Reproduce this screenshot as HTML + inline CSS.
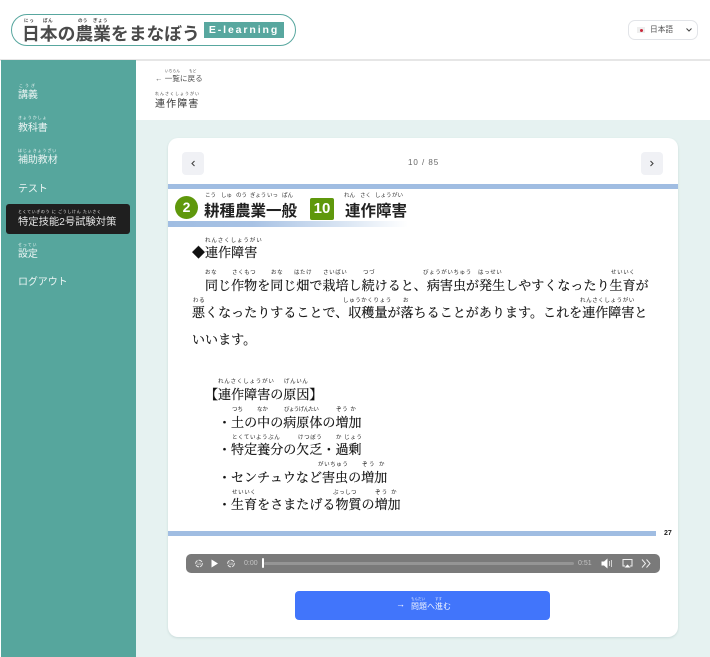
<!DOCTYPE html>
<html lang="ja"><head><meta charset="utf-8"><style>
html,body{margin:0;padding:0}
body{width:710px;height:657px;position:relative;overflow:hidden;background:#fff;font-family:"Liberation Sans","Noto Sans CJK JP",sans-serif}
.a{position:absolute;white-space:nowrap;line-height:1}
.r{font-size:4px;color:#444}
.s{font-family:"Liberation Serif","Noto Serif CJK JP","Noto Serif CJK SC",serif;font-size:13px;letter-spacing:.05px;color:#111;-webkit-text-stroke:.18px #111}
.rs{font-family:"Liberation Sans","Noto Sans CJK JP",sans-serif;font-size:5.500px;letter-spacing:.6px;color:#222}
.h{font-size:5.500px;letter-spacing:0;top:193.500px;color:#333}
.n{color:#fff;font-size:10px;letter-spacing:-.1px;opacity:.88}
.nr{color:#fff;font-size:4px;letter-spacing:.9px;opacity:.9}
</style></head><body>
<!-- header -->
<div class="a" style="left:11px;top:13.500px;width:285px;height:32px;border:1px solid #58a79f;border-radius:16px;box-sizing:border-box"></div>
<div class="a" style="left:22px;top:26px;font-size:17.800px;font-weight:700;color:#4a4a4a">日本の農業をまなぼう</div>
<div class="a r" style="left:24px;top:18.500px;font-size:4.500px;letter-spacing:.8px;font-weight:700">にっ</div>
<div class="a r" style="left:43px;top:18.500px;font-size:4.500px;letter-spacing:.6px;font-weight:700">ぽん</div>
<div class="a r" style="left:78px;top:18.500px;font-size:4.500px;letter-spacing:.4px;font-weight:700">のう</div>
<div class="a r" style="left:93px;top:18.500px;font-size:4.500px;letter-spacing:.6px;font-weight:700">ぎょう</div>
<div class="a" style="left:204px;top:22px;width:80px;height:16px;background:#58a79f;color:#fff;font-size:10.500px;font-weight:700;letter-spacing:1.900px;text-align:center;line-height:16px">E-learning</div>
<div class="a" style="left:628px;top:20px;width:70px;height:20px;border:1px solid #e2e4e8;border-radius:7px;box-sizing:border-box"></div>
<div class="a" style="left:637px;top:27px;width:8px;height:6px;background:#eee"></div>
<div class="a" style="left:639.500px;top:28.500px;width:3px;height:3px;border-radius:50%;background:#c8283c"></div>
<div class="a" style="left:650px;top:25.500px;font-size:7.700px;color:#555">日本語</div>
<svg class="a" style="left:685px;top:27px" width="8" height="6" viewBox="0 0 8 6"><path d="M1.500 1.500L4 4l2.500-2.500" fill="none" stroke="#444" stroke-width="1"/></svg>
<div class="a" style="left:0;top:59px;width:710px;height:1.500px;background:#e6e6e6"></div>
<!-- sidebar -->
<div class="a" style="left:1px;top:60px;width:135px;height:597px;background:#56a69d"></div>
<div class="a nr" style="left:19px;top:84px;letter-spacing:2px">こうぎ</div>
<div class="a n" style="left:18px;top:90.500px">講義</div>
<div class="a nr" style="left:18px;top:116px">きょうかしょ</div>
<div class="a n" style="left:18px;top:123.500px">教科書</div>
<div class="a nr" style="left:18px;top:149px">ほじょきょうざい</div>
<div class="a n" style="left:18px;top:155.500px">補助教材</div>
<div class="a n" style="left:18px;top:184.500px">テスト</div>
<div class="a" style="left:6px;top:204px;width:124px;height:30px;background:#1f1f1f;border-radius:3px"></div>
<div class="a nr" style="left:18px;top:210px;letter-spacing:.62px">とくていぎのう に ごうしけん たいさく</div>
<div class="a n" style="left:18px;top:217.500px;font-size:10.300px;letter-spacing:0">特定技能2号試験対策</div>
<div class="a nr" style="left:18px;top:242.500px">せってい</div>
<div class="a n" style="left:18px;top:250px">設定</div>
<div class="a n" style="left:18px;top:277.500px">ログアウト</div>
<!-- top content -->
<div class="a" style="left:136px;top:120px;width:574px;height:537px;background:#e6f2f1"></div>
<div class="a r" style="left:165px;top:70px;font-size:3.500px;letter-spacing:.3px">いちらん</div>
<div class="a r" style="left:189px;top:70px;font-size:3.500px;letter-spacing:.3px">もど</div>
<div class="a" style="left:155px;top:75px;font-size:7.600px;color:#555">← 一覧に戻る</div>
<div class="a r" style="left:155px;top:92px;letter-spacing:1px">れんさくしょうがい</div>
<div class="a" style="left:155px;top:99.500px;font-size:10px;letter-spacing:1.100px;color:#333">連作障害</div>
<!-- card -->
<div class="a" style="left:168px;top:138px;width:510px;height:499px;background:#fff;border-radius:10px;box-shadow:0 1px 2px rgba(120,150,150,.25)"></div>
<div class="a" style="left:182px;top:152px;width:22px;height:23px;background:#f0f1f5;border-radius:4px"></div>
<svg class="a" style="left:189px;top:159px" width="8" height="9" viewBox="0 0 8 9"><path d="M5.500 2L3 4.500 5.500 7" fill="none" stroke="#444" stroke-width="1.100"/></svg>
<div class="a" style="left:641px;top:152px;width:22px;height:23px;background:#f0f1f5;border-radius:4px"></div>
<svg class="a" style="left:648px;top:159px" width="8" height="9" viewBox="0 0 8 9"><path d="M2.500 2L5 4.500 2.500 7" fill="none" stroke="#444" stroke-width="1.100"/></svg>
<div class="a" style="left:408px;top:158.500px;font-size:8px;letter-spacing:.95px;color:#666">10 / 85</div>
<!-- slide -->
<div class="a" style="left:168px;top:184px;width:510px;height:5px;background:#a0bde2"></div>
<div class="a" style="left:168px;top:221px;width:240px;height:6px;background:linear-gradient(90deg,#a0bde2 0%,#a8c2e4 35%,#dce7f4 75%,#fff 100%)"></div>
<div class="a" style="left:175px;top:196px;width:23px;height:23px;border-radius:50%;background:#5f980c;color:#fff;font-size:14px;font-weight:700;line-height:23px;text-align:center">2</div>
<div class="a" style="left:204px;top:203.500px;font-size:15.500px;font-weight:700;color:#222">耕種農業一般</div>
<div class="a h" style="left:205px">こう</div>
<div class="a h" style="left:221px">しゅ</div>
<div class="a h" style="left:236px">のう</div>
<div class="a h" style="left:250px">ぎょう</div>
<div class="a h" style="left:267px">いっ</div>
<div class="a h" style="left:282px">ぱん</div>
<div class="a" style="left:310px;top:198px;width:24px;height:22px;border-radius:2px;background:#5f980c;color:#fff;font-size:15px;font-weight:700;line-height:22px;text-align:center">10</div>
<div class="a" style="left:345px;top:203.500px;font-size:15.500px;font-weight:700;color:#222">連作障害</div>
<div class="a h" style="left:344px">れん</div>
<div class="a h" style="left:360px">さく</div>
<div class="a h" style="left:375px">しょう</div>
<div class="a h" style="left:392px">がい</div>
<!-- body text -->
<div class="a rs" style="left:205px;top:239px;letter-spacing:.9px">れんさくしょうがい</div>
<div class="a s" style="left:192px;top:245.500px">◆連作障害</div>
<div class="a rs" style="left:205px;top:271px">おな</div>
<div class="a rs" style="left:232px;top:271px">さくもつ</div>
<div class="a rs" style="left:271px;top:271px">おな</div>
<div class="a rs" style="left:294px;top:271px">はたけ</div>
<div class="a rs" style="left:323px;top:271px">さいばい</div>
<div class="a rs" style="left:363px;top:271px">つづ</div>
<div class="a rs" style="left:423px;top:271px">びょうがいちゅう</div>
<div class="a rs" style="left:478px;top:271px">はっせい</div>
<div class="a rs" style="left:611px;top:271px">せいいく</div>
<div class="a s" style="left:205px;top:279px">同じ作物を同じ畑で栽培し続けると、病害虫が発生しやすくなったり生育が</div>
<div class="a rs" style="left:193px;top:299px">わる</div>
<div class="a rs" style="left:343px;top:299px">しゅうかくりょう</div>
<div class="a rs" style="left:403px;top:299px">お</div>
<div class="a rs" style="left:580px;top:299px">れんさくしょうがい</div>
<div class="a s" style="left:192px;top:306px">悪くなったりすることで、収穫量が落ちることがあります。これを連作障害と</div>
<div class="a s" style="left:192px;top:333px">いいます。</div>
<div class="a rs" style="left:218px;top:380px;letter-spacing:.8px">れんさくしょうがい</div>
<div class="a rs" style="left:284px;top:380px">げんいん</div>
<div class="a s" style="left:205px;top:388px">【連作障害の原因】</div>
<div class="a rs" style="left:232px;top:408px;letter-spacing:0">つち</div>
<div class="a rs" style="left:257px;top:408px;letter-spacing:0">なか</div>
<div class="a rs" style="left:284px;top:408px;letter-spacing:-.6px">びょうげんたい</div>
<div class="a rs" style="left:336px;top:408px">ぞう か</div>
<div class="a s" style="left:218px;top:416px">・土の中の病原体の増加</div>
<div class="a rs" style="left:232px;top:436px">とくていようぶん</div>
<div class="a rs" style="left:298px;top:436px">けつぼう</div>
<div class="a rs" style="left:336px;top:436px">か じょう</div>
<div class="a s" style="left:218px;top:443px">・特定養分の欠乏・過剰</div>
<div class="a rs" style="left:318px;top:463px">がいちゅう</div>
<div class="a rs" style="left:362px;top:463px;letter-spacing:1.500px">ぞう か</div>
<div class="a s" style="left:218px;top:471px">・センチュウなど害虫の増加</div>
<div class="a rs" style="left:232px;top:491px">せいいく</div>
<div class="a rs" style="left:333px;top:491px">ぶっしつ</div>
<div class="a rs" style="left:375px;top:491px;letter-spacing:1.200px">ぞう か</div>
<div class="a s" style="left:218px;top:498px">・生育をさまたげる物質の増加</div>
<div class="a" style="left:168px;top:531px;width:488px;height:5px;background:#a0bde2"></div>
<div class="a" style="left:664px;top:530px;font-size:7px;font-weight:700;color:#222">27</div>
<!-- audio -->
<div class="a" style="left:186px;top:554px;width:474px;height:19px;background:#7a7a7a;border-radius:5px"></div>
<svg class="a" style="left:186px;top:554px" width="60" height="19" viewBox="0 0 60 19">
<circle cx="13" cy="9.500" r="3.300" fill="none" stroke="#e8e8e8" stroke-width="1" stroke-dasharray="4 1"/><circle cx="45" cy="9.500" r="3.300" fill="none" stroke="#e8e8e8" stroke-width="1" stroke-dasharray="4 1"/>
<text x="13" y="11" font-size="3.500" fill="#eee" text-anchor="middle" font-family="Liberation Sans">10</text><text x="45" y="11" font-size="3.500" fill="#eee" text-anchor="middle" font-family="Liberation Sans">10</text>
<path d="M25.500 5.500v8l6.500-4z" fill="#fff"/></svg>
<div class="a" style="left:244px;top:560px;font-size:7px;color:#c4c4c4">0:00</div>
<div class="a" style="left:262px;top:558px;width:2px;height:10px;background:#fff;border-radius:1px"></div>
<div class="a" style="left:264px;top:561.500px;width:310px;height:3px;background:#959595;border-radius:2px"></div>
<div class="a" style="left:578px;top:560px;font-size:7px;color:#c4c4c4">0:51</div>
<svg class="a" style="left:600px;top:556px" width="54" height="15" viewBox="0 0 54 15">
<path d="M1.500 5.500h2.500l3.500-3v10l-3.500-3h-2.500z" fill="#fff"/><path d="M9.500 5v5M11.500 4v7" stroke="#e8e8e8" stroke-width=".8" fill="none"/>
<path d="M25 10h-2V3.500h9V10h-2" fill="none" stroke="#f0f0f0" stroke-width="1"/><path d="M24.500 11.500h6l-3-3z" fill="#fff"/>
<path d="M42 3.500l3.500 4-3.500 4M46.500 3.500l3.500 4-3.500 4" fill="none" stroke="#eee" stroke-width="1"/></svg>
<!-- button -->
<div class="a" style="left:295px;top:591px;width:255px;height:29px;background:#4175fb;border-radius:4px"></div>
<div class="a" style="left:396px;top:600px;font-size:9px;color:#fff">→</div>
<div class="a" style="left:411px;top:603px;font-size:8px;color:#fff;opacity:.92">問題へ進む</div>
<div class="a" style="left:411px;top:597.500px;font-size:3.500px;color:#fff;opacity:.85">もんだい</div>
<div class="a" style="left:435px;top:597.500px;font-size:3.500px;color:#fff;opacity:.85">すす</div>
</body></html>
